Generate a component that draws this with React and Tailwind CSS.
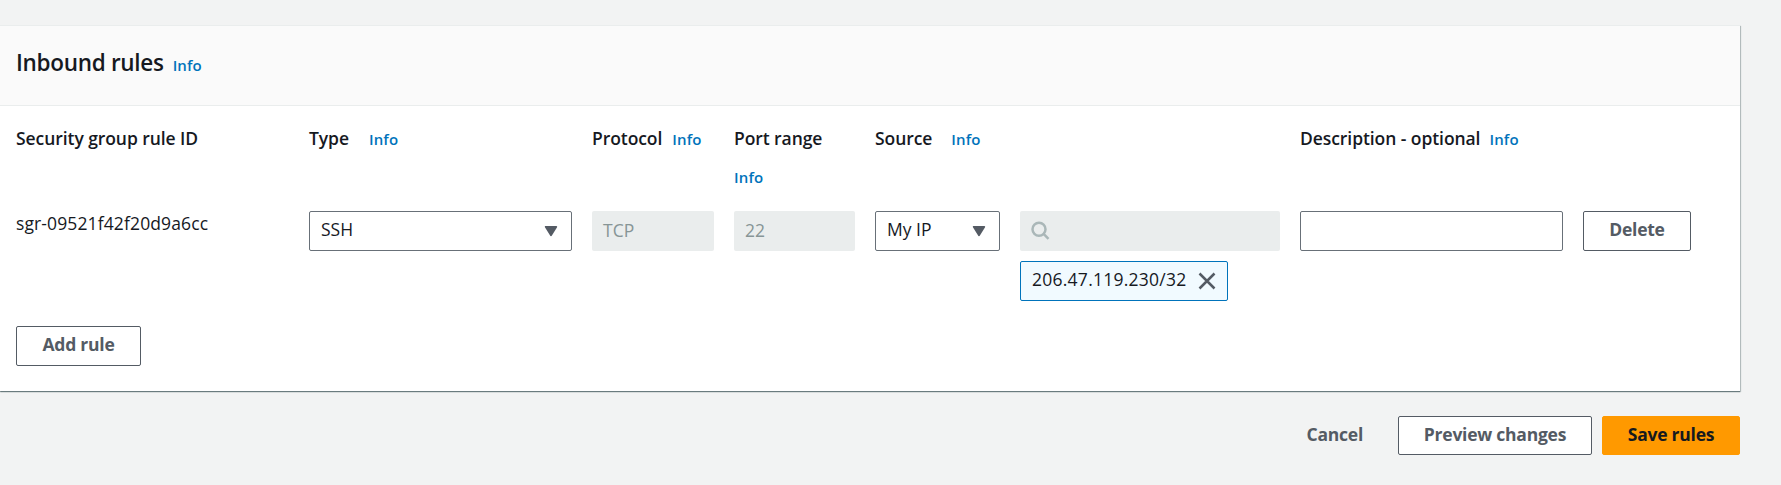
function Info({ className = "" }) {
  return (
    <a href="#" className={`text-[15px] font-semibold tracking-[0.15px] text-[#0073bb] ${className}`}>
      Info
    </a>
  );
}

function ColumnHeader({ label, gap = "gap-[9px]", className = "", wrap = false, info = true }) {
  return (
    <div className={`flex h-[85px] shrink-0 pt-[20px] leading-6 ${wrap ? "flex-col gap-[14px]" : gap} ${className}`}>
      <span className="text-[17.5px] font-semibold tracking-[-0.07px] whitespace-nowrap">{label}</span>
      {info && <Info className="pt-px" />}
    </div>
  );
}

function Caret() {
  return (
    <svg width="14" height="12" viewBox="0 0 14 12" className="mt-px shrink-0" aria-hidden="true">
      <path d="M1.7 1.8h10.6L7 10.3z" fill="#545b64" stroke="#545b64" strokeWidth="1.8" strokeLinejoin="round" />
    </svg>
  );
}

function Select({ value }) {
  return (
    <button className="flex h-10 w-full items-center justify-between rounded-[2px] border border-[#687078] bg-white pr-[13px] pb-px pl-[11px] text-[17.5px]">
      <span className="-mt-[3px] leading-6">{value}</span>
      <Caret />
    </button>
  );
}

function Disabled({ children }) {
  return (
    <div className="flex h-10 w-full items-center rounded-[2px] bg-[#eaeded] px-[11px] text-[17.5px] leading-6 text-[#879596]">
      {children}
    </div>
  );
}

function Button({ children, className = "" }) {
  return (
    <button
      className={`flex items-center justify-center rounded-[2px] border text-[17.5px] leading-6 font-bold tracking-[-0.24px] whitespace-nowrap ${className}`}
    >
      <span className="-mt-[3px]">{children}</span>
    </button>
  );
}

export default function App() {
  return (
    <div className="h-[485px] w-[1781px] overflow-hidden bg-[#f2f3f3] pt-[25px] font-['Open_Sans',sans-serif] text-[#16191f]">
      <section className="h-[366px] w-[1740px] border-t border-[#eaeded] bg-white shadow-[0_1px_1px_0_rgba(0,28,36,0.45),1px_1px_1px_0_rgba(0,28,36,0.2)]">
        <header className="flex h-20 items-baseline gap-[9px] border-b border-[#eaeded] bg-[#fafafa] pt-[21px] pl-4">
          <h2 className="text-[22.5px] leading-8 font-semibold tracking-[-0.3px]">Inbound rules</h2>
          <Info />
        </header>

        <div className="grid grid-cols-[293px_283px_142px_141px_145px_280px_283px_108px] pl-4">
          <ColumnHeader label="Security group rule ID" info={false} />
          <ColumnHeader label="Type" gap="gap-[20px]" />
          <ColumnHeader label="Protocol" gap="gap-[10px]" />
          <ColumnHeader label="Port range" wrap />
          <ColumnHeader label="Source" gap="gap-[19px]" />
          <div />
          <ColumnHeader label="Description - optional" />
          <div />
        </div>

        <div className="mt-5 flex h-[95px] items-start gap-5 pl-4">
          <div className="w-[273px] text-[17.5px] leading-6 tracking-[0.12px]">sgr-09521f42f20d9a6cc</div>
          <div className="w-[263px]">
            <Select value="SSH" />
          </div>
          <div className="w-[122px]">
            <Disabled>
              <span className="-mt-[2px]">TCP</span>
            </Disabled>
          </div>
          <div className="w-[121px]">
            <Disabled>
              <span className="-mt-[2px]">22</span>
            </Disabled>
          </div>
          <div className="w-[125px]">
            <Select value="My IP" />
          </div>
          <div className="w-[260px]">
            <Disabled>
              <svg width="20" height="20" viewBox="0 0 20 20" fill="none" stroke="#aab7b8" strokeWidth="2.5" aria-hidden="true">
                <circle cx="8" cy="8.3" r="6.5" />
                <path d="m12.6 12.9 4.9 4.9" />
              </svg>
            </Disabled>
            <div className="mt-[10px] flex h-10 w-[208px] items-center justify-between rounded-[2px] border border-[#0073bb] bg-[#f1faff] pr-[11px] pb-px pl-[11px] text-[17.5px] leading-6">
              <span className="-mt-[3px] tracking-[0.25px]">206.47.119.230/32</span>
              <svg width="18" height="18" viewBox="0 0 18 18" fill="none" stroke="#545b64" strokeWidth="2.5" className="mt-px" aria-hidden="true">
                <path d="m1.5 1.5 15 15m0-15-15 15" />
              </svg>
            </div>
          </div>
          <input aria-label="Description" className="h-10 w-[263px] rounded-[2px] border border-[#687078] bg-white px-[10px]" />
          <Button className="h-10 w-[108px] border-[#545b64] pb-px text-[#545b64]">Delete</Button>
        </div>

        <div className="pt-5 pl-4">
          <Button className="h-10 w-[125px] border-[#545b64] pb-px text-[#545b64]">Add rule</Button>
        </div>
      </section>

      <footer className="mt-[25px] flex h-[39px] w-[1740px] justify-end">
        <Button className="h-[39px] border-transparent text-[#545b64]">Cancel</Button>
        <Button className="ml-[34px] h-[39px] w-[194px] border-[#545b64] bg-white text-[#545b64]">Preview changes</Button>
        <Button className="ml-[10px] h-[39px] w-[138px] border-[#ff9900] bg-[#ff9900] text-[#16191f]">Save rules</Button>
      </footer>
    </div>
  );
}
